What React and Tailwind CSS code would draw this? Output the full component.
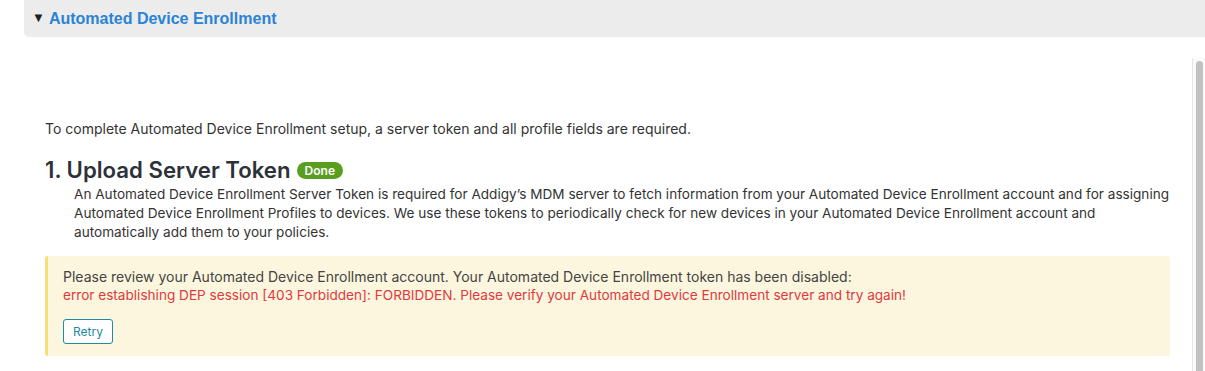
export default function App() {
  return (
    <div className="w-[1205px] h-[371px] bg-white overflow-hidden flex flex-col font-['Inter','Liberation_Sans',sans-serif]">
      <div className="ml-[24px] h-[37px] shrink-0 bg-[#ececec] rounded-bl-[5px] flex items-center pl-[8px] font-['Liberation_Sans',Arial,sans-serif]">
        <span className="text-[13px] text-[#222] mr-[4px] mt-[-2px]">▼</span>
        <span className="text-[16px] font-bold text-[#2a83d6]">Automated Device Enrollment</span>
      </div>

      <div className="flex flex-1 min-h-0">
        <div className="flex-1 pl-[45px] pr-[22px] pt-[82px]">
          <p className="text-[14px] leading-[20px] text-[#333]">
            To complete Automated Device Enrollment setup, a server token and all profile fields are required.
          </p>

          <div className="mt-[17px] flex items-center h-[28px]">
            <h2 className="text-[22.2px] leading-[28px] font-semibold text-[#2d3139]">1. Upload Server Token</h2>
            <span className="ml-[6px] mt-[1px] bg-[#5a9e1f] text-white text-[12px] font-semibold leading-[17px] px-[8px] rounded-full">
              Done
            </span>
          </div>

          <p className="pl-[29px] mt-[1px] text-[13.6px] leading-[19px] text-[#333]">
            An Automated Device Enrollment Server Token is required for Addigy’s MDM server to fetch information from your Automated Device Enrollment account and for assigning Automated Device Enrollment Profiles to devices. We use these tokens to periodically check for new devices in your Automated Device Enrollment account and automatically add them to your policies.
          </p>

          <div className="mt-[14px] bg-[#fcf6df] border-l-[3px] border-[#f9dd76] rounded-[3px] pl-[15px] pt-[11px] pb-[12px]">
            <p className="text-[14px] leading-[19px] text-[#444]">
              Please review your Automated Device Enrollment account. Your Automated Device Enrollment token has been disabled:
            </p>
            <p className="text-[13.6px] leading-[19px] text-[#e0393e]">
              error establishing DEP session [403 Forbidden]: FORBIDDEN. Please verify your Automated Device Enrollment server and try again!
            </p>
            <button className="mt-[14px] h-[25px] w-[50px] border border-[#1f8aa0] rounded-[3px] bg-white text-[#1f8aa0] text-[12px] leading-none">
              Retry
            </button>
          </div>
        </div>

        <div className="w-[13px] mt-[21px] border-l border-[#e6e6e6] bg-[#fafafa] flex justify-center">
          <div className="w-[7px] mt-[3px] h-full rounded-t-full bg-[#c1c1c1]" />
        </div>
      </div>
    </div>
  );
}
